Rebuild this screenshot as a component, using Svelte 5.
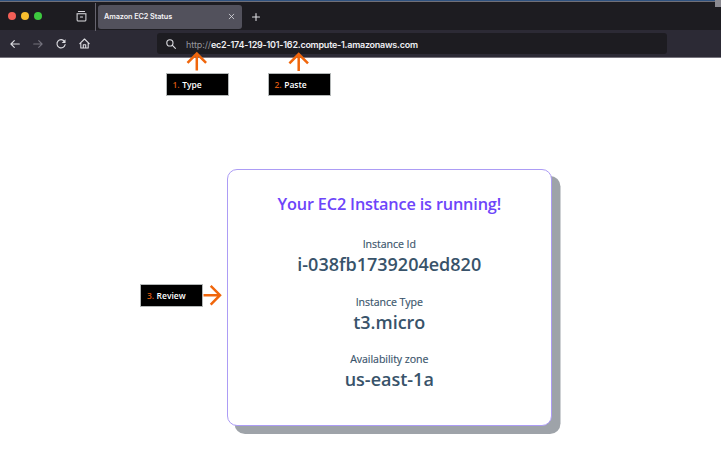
<script>
  const lights = ['#f35f57', '#f8bd2e', '#3dc93f'];
  const details = [
    { label: 'Instance Id', value: 'i-038fb1739204ed820' },
    { label: 'Instance Type', value: 't3.micro' },
    { label: 'Availability zone', value: 'us-east-1a' }
  ];
  const steps = [
    { n: 1, text: 'Type', x: 166, y: 73 },
    { n: 2, text: 'Paste', x: 268, y: 73 },
    { n: 3, text: 'Review', x: 140.4, y: 284 }
  ];
</script>

<div class="page">
  <header>
    <div class="tabs">
      <div class="lights">
        {#each lights as c}<i style:background={c}></i>{/each}
      </div>
      <svg class="box" width="11" height="11" viewBox="0 0 12 12">
        <path d="M2.6.5h6.8M1 3.1h10M1.2 3.1v6.6q0 1.2 1.2 1.2h7.2q1.2 0 1.2-1.2V3.1M4.8 6.5h2.4" />
      </svg>
      <div class="tab">
        <span>Amazon EC2 Status</span>
        <svg width="5" height="5" viewBox="0 0 5 5"><path d="M.2.2l4.6 4.6M4.8.2L.2 4.8" /></svg>
      </div>
      <svg class="plus" width="8" height="8" viewBox="0 0 8 8"><path d="M4 .5v7M.5 4h7" /></svg>
    </div>
    <div class="bar">
      <svg width="10" height="10" viewBox="0 0 10 10"><path d="M9.3 5H1M4.3 1.6L.9 5l3.4 3.4" /></svg>
      <svg class="dim" width="10" height="10" viewBox="0 0 10 10"><path d="M.7 5H9M5.7 1.6L9.1 5 5.7 8.4" /></svg>
      <svg class="reload" width="10" height="10" viewBox="0 0 10 10">
        <path d="M8.4 2.3A4.1 4.1 0 1 0 9.1 5.6" /><path class="fill" d="M9.5.3v3.8H5.7z" />
      </svg>
      <svg class="home" width="11" height="11" viewBox="0 0 11 11">
        <path d="M.8 5.6L5.5 1l4.7 4.6M1.8 4.8v5.2h7.4V4.8M4.3 9.8V6.7h2.4v3.1" />
      </svg>
      <div class="url">
        <svg width="10" height="10" viewBox="0 0 10 10"><circle cx="3.9" cy="3.9" r="3.1" /><path d="M6.2 6.2l3.2 3.2" /></svg>
        <span><em>http://</em>ec2-174-129-101-162.compute-1.amazonaws.com</span>
      </div>
    </div>
  </header>
  <i class="corner"></i>

  <main>
    <section class="card">
      <h1>Your EC2 Instance is running!</h1>
      {#each details as d}
        <div class="detail">
          <p>{d.label}</p>
          <strong>{d.value}</strong>
        </div>
      {/each}
    </section>
  </main>

  {#each steps as s}
    <div class="step" style:left="{s.x}px" style:top="{s.y}px"><b>{s.n}.</b><span>{s.text}</span></div>
  {/each}
  <svg class="arrows" width="721" height="476" viewBox="0 0 721 476">
    <path d="M196.8 70.5V54M187.5 62.9l9.3-9.4 9.3 9.4" />
    <path d="M298.7 71V54.5M289.4 63.4l9.3-9.4 9.3 9.4" />
    <path d="M203.5 295.2H219.5M210.7 285.8l9.3 9.4-9.3 9.4" />
  </svg>
</div>

<style>
  .page { position: relative; width: 721px; height: 476px; overflow: hidden; background: #fff; font-family: "Open Sans", sans-serif; }
  svg { display: block; flex: none; overflow: visible; fill: none; stroke: #dddde2; stroke-width: 1.1; stroke-linecap: round; stroke-linejoin: round; }
  header { box-sizing: border-box; height: 58px; background: #2c2a35; border-bottom: 1px solid #77747d; font-family: Inter, sans-serif; }
  .tabs { box-sizing: border-box; height: 30px; display: flex; align-items: center; background: #1d1c21; border-top: 1px solid #2f5280; box-shadow: inset 0 1px #706f78; padding: 2px 0 0 7.5px; }
  .lights { display: flex; gap: 5px; width: 68.5px; padding-bottom: 1px; }
  .lights i { width: 8px; height: 8px; border-radius: 50%; }
  .box { margin-right: 9px; }
  .tab { box-sizing: border-box; height: 24px; width: 144px; margin-left: 2px; border-radius: 3px; background: #52515c; display: flex; align-items: center; justify-content: space-between; padding: 0 8px 0 6px; color: #f2f2f5; font-size: 7.3px; letter-spacing: -.09px; font-weight: 600; position: relative; }
  .tab::before { content: ""; position: absolute; left: -3px; top: -2px; width: 1px; height: 28px; background: #66646e; }
  .tab span { white-space: nowrap; }
  .tab svg { stroke-width: .8; }
  .plus { margin-left: 10px; }
  .bar { height: 27px; display: flex; align-items: center; padding-left: 9.5px; }
  .dim { margin-left: 13px; stroke: #74727d; }
  .reload { margin-left: 13.5px; }
  .reload .fill { fill: #dddde2; stroke: none; }
  .home { margin-left: 12.5px; }
  .url { box-sizing: border-box; width: 510.5px; height: 21px; margin-left: 67px; border-radius: 3px; background: #1d1c21; display: flex; align-items: center; padding-left: 9px; gap: 10.5px; }
  .url span { font-size: 9px; font-weight: 600; color: #eeeef2; white-space: nowrap; letter-spacing: -.24px; padding-top: 1px; }
  .url em { font-style: normal; font-weight: 400; color: #96959c; letter-spacing: -.08px; }
  .corner { position: absolute; right: 0; top: 0; width: 6px; height: 7px; background: #8a8990; }
  main { display: flex; padding: 111px 0 0 227px; }
  .card { box-sizing: border-box; width: 324.5px; height: 256.5px; border: 1px solid #ac9cf5; border-radius: 10px; background: #fff; box-shadow: 8px 7.5px 0 .5px #9ea3a9; display: flex; flex-direction: column; align-items: center; padding-top: 22px; color: #38536a; }
  h1 { margin: 0 0 21px; font-size: 16.3px; letter-spacing: -.17px; line-height: 24px; font-weight: 600; color: #6d45fa; white-space: nowrap; }
  .detail { height: 57.7px; display: flex; flex-direction: column; align-items: center; }
  p { margin: 0; font-size: 10.6px; letter-spacing: -.06px; line-height: 15px; -webkit-text-stroke: .15px; }
  strong { font-size: 18px; line-height: 24px; font-weight: 600; white-space: nowrap; }
  .step { position: absolute; box-sizing: border-box; width: 63px; height: 23px; background: #000; border: .5px solid #b4b8b8; display: flex; align-items: center; gap: 2.5px; padding: 0 0 1px 5.5px; color: #fff; font-size: 8.5px; font-weight: 600; }
  .step b { font-weight: 600; color: #d9560f; }
  .arrows { position: absolute; left: 0; top: 0; stroke: #f0660c; stroke-width: 2.5; stroke-linecap: butt; stroke-linejoin: miter; }
</style>
